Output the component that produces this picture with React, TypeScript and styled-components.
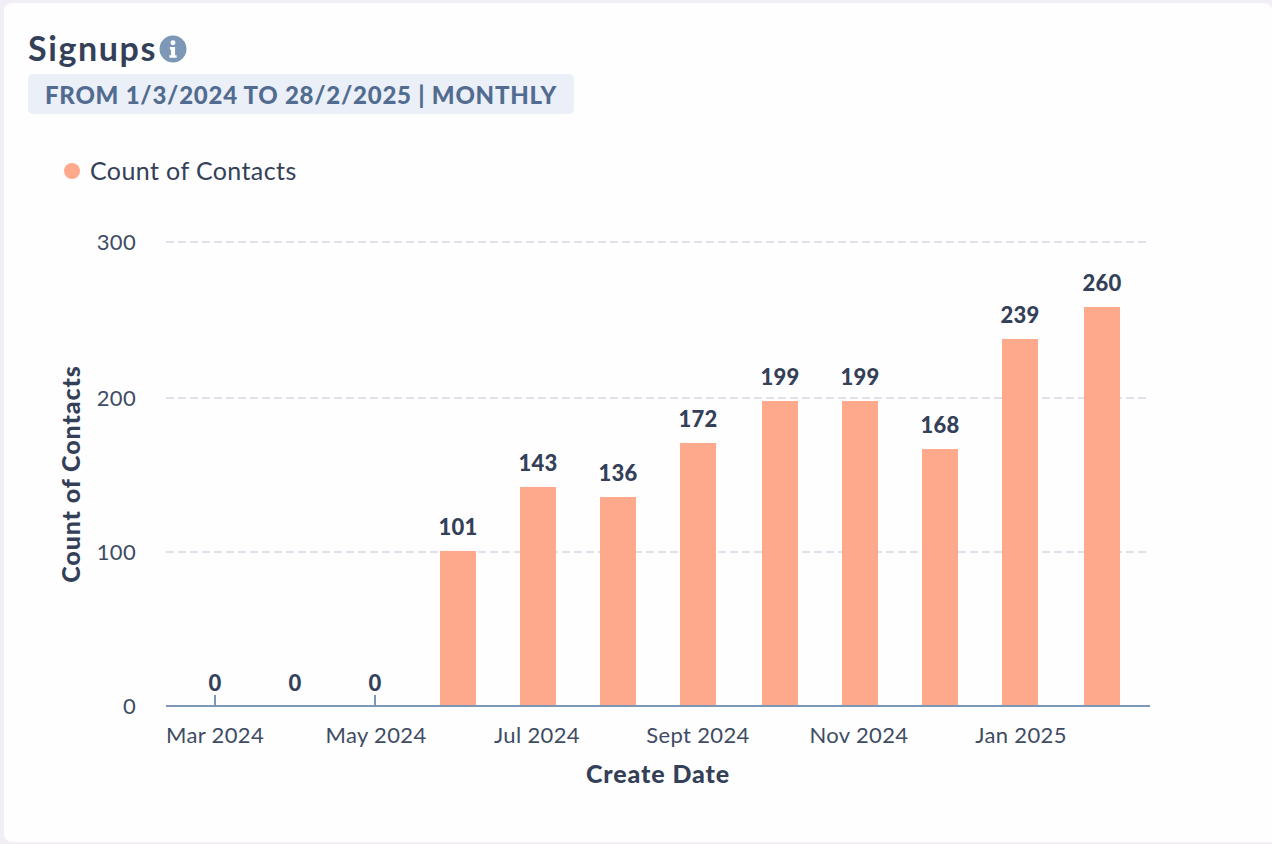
import React from "react";
import styled, { createGlobalStyle } from "styled-components";

const GlobalStyle = createGlobalStyle`
  html, body {
    margin: 0;
    padding: 0;
    background: #f1eff5;
    font-family: "Lato", "Noto Sans", sans-serif;
  }
`;

const SPage = styled.div`
  width: 1272px;
  height: 844px;
  box-sizing: border-box;
  padding: 3px 0 2px 4px;
  overflow: hidden;
`;

const SCard = styled.section`
  height: 100%;
  box-sizing: border-box;
  background: #fefefe;
  border-radius: 8px 8px 0 8px;
  padding: 27px 0 0 24px;
`;

const STitleRow = styled.div`
  display: flex;
  align-items: center;
  height: 38px;
`;

const STitle = styled.h2`
  margin: -3px 0 0;
  color: #344058;
  font-size: 34px;
  font-weight: 700;
  letter-spacing: 1.6px;
  line-height: 36px;
`;

const SInfo = styled.svg`
  width: 28px;
  height: 28px;
  margin-left: 2px;
  margin-top: -1px;
`;

const SPill = styled.div`
  display: inline-flex;
  align-items: center;
  height: 40px;
  box-sizing: border-box;
  margin-top: 6px;
  padding: 0 17px;
  border-radius: 5px;
  background: #eaeff8;
  color: #516c90;
  font-size: 24px;
  font-weight: 900;
  letter-spacing: 0.75px;
  white-space: nowrap;
`;

const SLegend = styled.div`
  display: flex;
  align-items: center;
  gap: 10px;
  height: 30px;
  margin: 42px 0 0 36px;
  color: #344058;
  font-size: 25px;
  letter-spacing: 0.4px;
`;

const SLegendLabel = styled.span`
  margin-top: -2px;
`;

const SDot = styled.span`
  width: 16px;
  height: 16px;
  border-radius: 50%;
  background: #ffa98c;
`;

const SChart = styled.svg`
  display: block;
  width: 1268px;
  height: 642px;
  margin-left: -24px;
  margin-top: 14px;
  font-family: "Lato", "Noto Sans", sans-serif;
`;

const SAxisText = styled.text`
  fill: #3f4c63;
  font-size: 22px;
  letter-spacing: 0.35px;
`;

const SValue = styled.text`
  fill: #344058;
  font-size: 22px;
  font-weight: 900;
  letter-spacing: 0.3px;
  text-anchor: middle;
`;

const STitleText = styled.text`
  fill: #344058;
  font-size: 25px;
  font-weight: 900;
  letter-spacing: 0.9px;
  text-anchor: middle;
`;

// the svg viewBox uses page coordinates
const OX = 4;
const OY = 200;

const bars = [
  { x: 440, top: 551, value: 101 },
  { x: 520, top: 487, value: 143 },
  { x: 600, top: 497, value: 136 },
  { x: 680, top: 443, value: 172 },
  { x: 762, top: 401, value: 199 },
  { x: 842, top: 401, value: 199 },
  { x: 922, top: 449, value: 168 },
  { x: 1002, top: 339, value: 239 },
  { x: 1084, top: 307, value: 260 },
];

const yTicks = [
  { label: "300", y: 242 },
  { label: "200", y: 398 },
  { label: "100", y: 552 },
  { label: "0", y: 706 },
];

const months = [
  { label: "Mar 2024", x: 215 },
  { label: "May 2024", x: 376 },
  { label: "Jul 2024", x: 537 },
  { label: "Sept 2024", x: 698 },
  { label: "Nov 2024", x: 859 },
  { label: "Jan 2025", x: 1021 },
];

function Chart() {
  return (
    <SChart viewBox={`${OX} ${OY} 1268 642`}>
      {yTicks.slice(0, 3).map((t) => (
        <line
          key={t.label}
          x1={166}
          x2={1148}
          y1={t.y}
          y2={t.y}
          stroke="#e3dfeb"
          strokeWidth={2}
          strokeDasharray="8 4"
        />
      ))}
      {yTicks.map((t) => (
        <SAxisText key={t.label} x={136} y={t.y + 8} textAnchor="end">
          {t.label}
        </SAxisText>
      ))}
      {bars.map((b) => (
        <g key={b.x}>
          <rect x={b.x} y={b.top} width={36} height={705 - b.top} fill="#ffa98c" />
          <SValue x={b.x + 18} y={b.top - 16}>
            {b.value}
          </SValue>
        </g>
      ))}
      {[215, 295, 375].map((x) => (
        <SValue key={x} x={x} y={691}>
          0
        </SValue>
      ))}
      <line x1={215} x2={215} y1={695} y2={706} stroke="#7c98b6" strokeWidth={2} />
      <line x1={375} x2={375} y1={695} y2={706} stroke="#7c98b6" strokeWidth={2} />
      <line x1={166} x2={1150} y1={706} y2={706} stroke="#7c98b6" strokeWidth={2} />
      {months.map((m) => (
        <SAxisText key={m.label} x={m.x} y={743} textAnchor="middle">
          {m.label}
        </SAxisText>
      ))}
      <STitleText x={658} y={783}>
        Create Date
      </STitleText>
      <STitleText transform="rotate(-90 71 474)" x={71} y={483}>
        Count of Contacts
      </STitleText>
    </SChart>
  );
}

export default function App() {
  return (
    <>
      <GlobalStyle />
      <SPage>
        <SCard>
          <STitleRow>
            <STitle>Signups</STitle>
            <SInfo viewBox="0 0 27 27" aria-hidden="true">
              <circle cx="13.5" cy="13.5" r="13" fill="#7c98b6" />
              <circle cx="13.5" cy="7.5" r="2.4" fill="#fff" />
              <path d="M10.5 11.5h5v8h1.5v2.5h-7v-2.5h1.5v-5.5h-1z" fill="#fff" />
            </SInfo>
          </STitleRow>
          <SPill>FROM 1/3/2024 TO 28/2/2025 | MONTHLY</SPill>
          <SLegend>
            <SDot />
            <SLegendLabel>Count of Contacts</SLegendLabel>
          </SLegend>
          <Chart />
        </SCard>
      </SPage>
    </>
  );
}
